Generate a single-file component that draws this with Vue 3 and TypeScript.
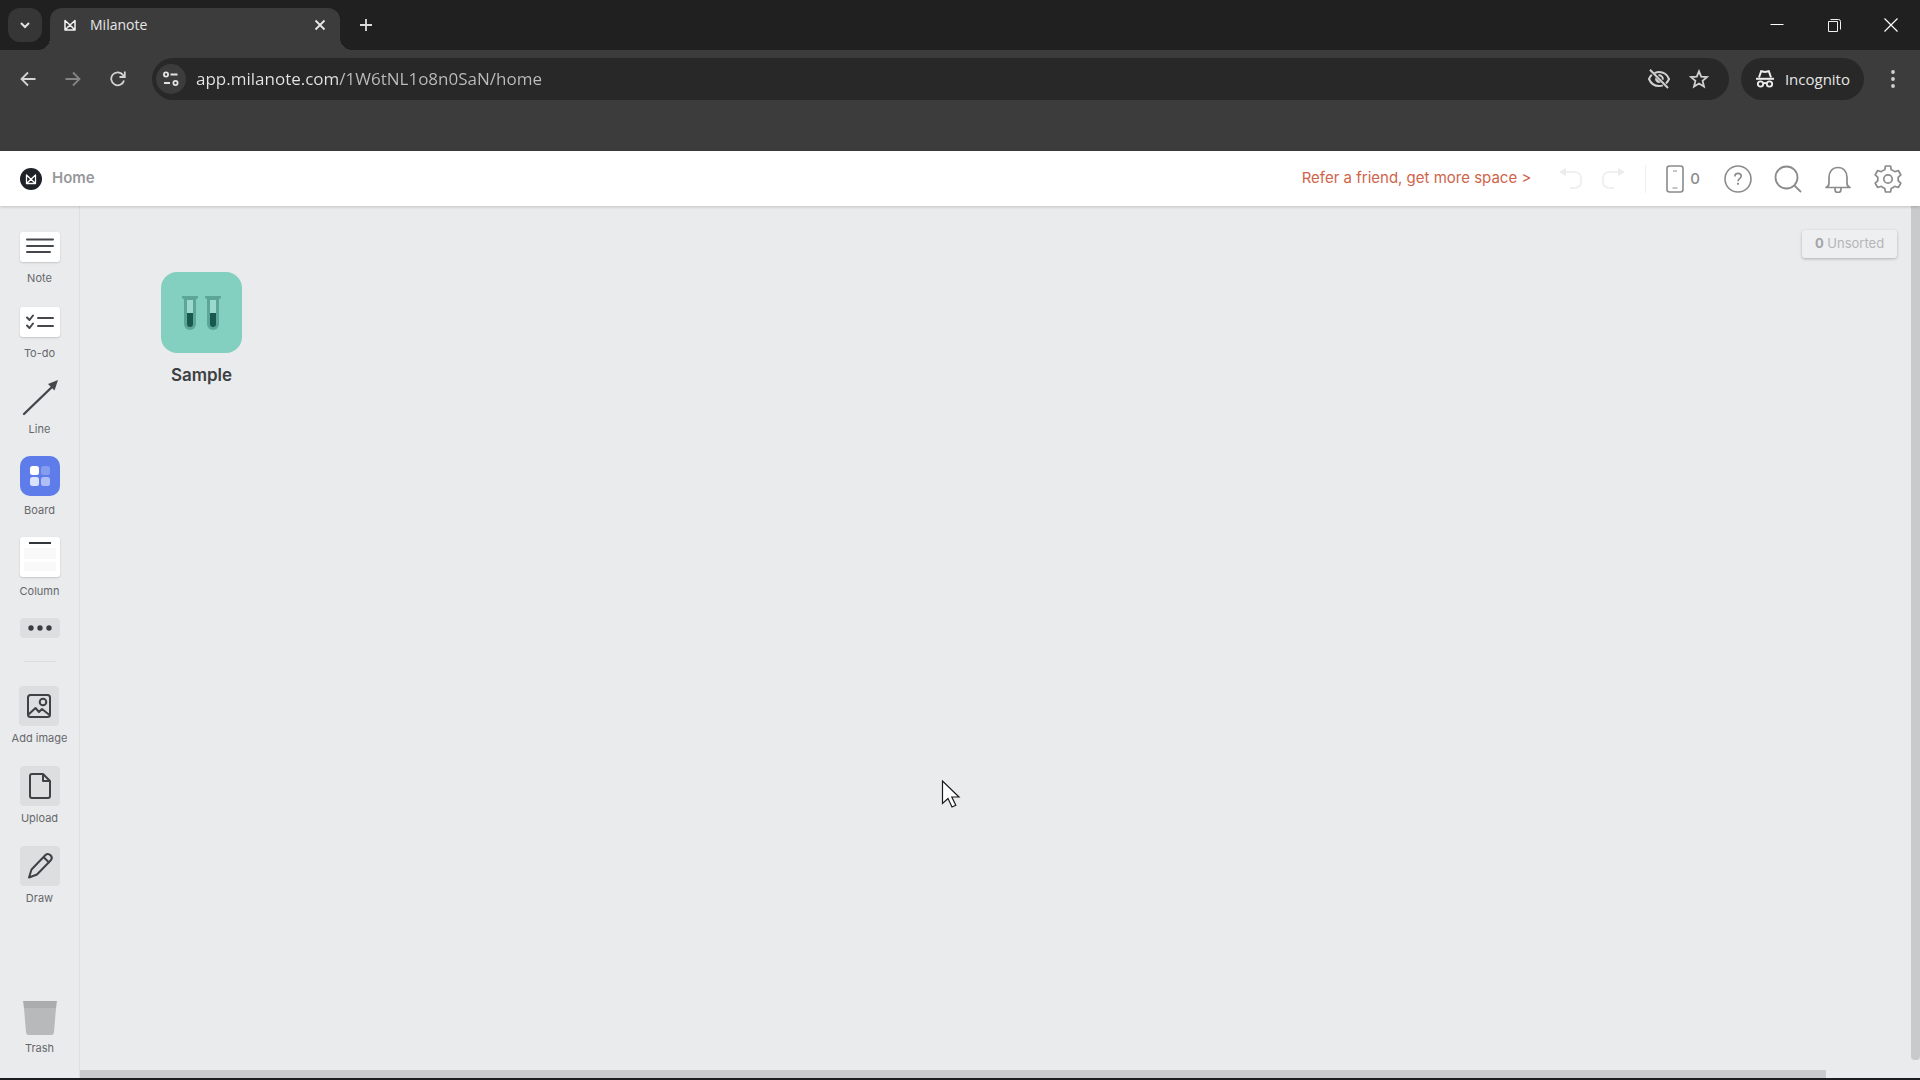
<script setup lang="ts">
import { ref } from 'vue'

interface Tool {
  id: string
  label: string
}

const address = ref('app.milanote.com/1W6tNL1o8n0SaN/home')

const createTools: Tool[] = [
  { id: 'note', label: 'Note' },
  { id: 'todo', label: 'To-do' },
  { id: 'line', label: 'Line' },
  { id: 'board', label: 'Board' },
  { id: 'column', label: 'Column' },
]

const mediaTools: Tool[] = [
  { id: 'image', label: 'Add image' },
  { id: 'upload', label: 'Upload' },
  { id: 'draw', label: 'Draw' },
]
</script>

<template>
  <div class="window">
    <header class="chrome">
      <div class="tabstrip">
        <button class="tab-search" aria-label="Search tabs">
          <svg width="12" height="12" viewBox="0 0 12 12"><path d="M2 4l4 4 4-4" fill="none" stroke="#e3e3e3" stroke-width="2" /></svg>
        </button>
        <div class="tab">
          <svg class="favicon" width="12" height="12" viewBox="0 0 12 12"><path d="M1 11V1.500L6 6l5-4.500V11zM1 11l5-5 5 5" fill="none" stroke="#f2f2f2" stroke-width="1.500" stroke-linejoin="round" /></svg>
          <span class="tab-title">Milanote</span>
          <button class="plain" aria-label="Close tab">
            <svg width="12" height="12" viewBox="0 0 12 12"><path d="M1.500 1.500l9 9M10.500 1.500l-9 9" stroke="#e8e8e8" stroke-width="1.800" /></svg>
          </button>
        </div>
        <button class="plain new-tab" aria-label="New tab">
          <svg width="14" height="14" viewBox="0 0 14 14"><path d="M7 1v12M1 7h12" stroke="#dcdcdc" stroke-width="1.800" /></svg>
        </button>
        <div class="window-controls">
          <button class="plain" aria-label="Minimize">
            <svg width="14" height="14" viewBox="0 0 14 14"><path d="M.5 6.500h13" stroke="#fff" /></svg>
          </button>
          <button class="plain" aria-label="Restore">
            <svg width="14" height="14" viewBox="0 0 14 14"><path d="M1.500 3.500h9v10h-9zM3.500 1.500h8a2 2 0 0 1 2 2v8" fill="none" stroke="#f0f0f0" /></svg>
          </button>
          <button class="plain" aria-label="Close">
            <svg width="14" height="14" viewBox="0 0 14 14"><path d="M.5.5l13 13M13.500.5l-13 13" stroke="#fff" stroke-width="1.200" /></svg>
          </button>
        </div>
      </div>

      <div class="toolbar">
        <nav class="history">
          <button class="plain" aria-label="Back">
            <svg width="16" height="16" viewBox="0 0 16 16"><path d="M15.500 8H2M8 1.500L1.500 8 8 14.500" fill="none" stroke="#d4d4d4" stroke-width="1.800" /></svg>
          </button>
          <button class="plain" aria-label="Forward">
            <svg width="16" height="16" viewBox="0 0 16 16"><path d="M.5 8H14M8 1.500L14.500 8 8 14.500" fill="none" stroke="#858585" stroke-width="1.800" /></svg>
          </button>
          <button class="plain" aria-label="Reload">
            <svg width="16" height="16" viewBox="0 0 16 16"><path d="M14 9.500A6.500 6.500 0 1 1 13 4l1.500 2M14.800.5V6H9.500" fill="none" stroke="#d4d4d4" stroke-width="1.800" /></svg>
          </button>
        </nav>
        <div class="omnibox">
          <button class="site-info" aria-label="View site information">
            <svg width="16" height="16" viewBox="0 0 16 16"><g fill="none" stroke="#e3e3e3" stroke-width="1.800"><circle cx="3" cy="3.500" r="2.100" /><path d="M7.500 3.500h7M1 12h6" /><circle cx="12.500" cy="12" r="2.100" /></g></svg>
          </button>
          <input v-model="address" class="address" type="text" aria-label="Address" spellcheck="false" />
          <button class="plain" aria-label="Third-party cookies blocked">
            <svg width="24" height="20" viewBox="0 0 24 20"><g fill="none" stroke="#d0d0d0" stroke-width="2"><path d="M7.500 4.200C9 3.500 10.500 3 12 3c4.500 0 8.300 2.800 10 7-.7 1.700-1.700 3.200-3 4.400M15.800 16.300c-1.200.5-2.500.7-3.800.7-4.500 0-8.300-2.800-10-7 .7-1.700 1.600-3 2.800-4.200" /><path d="M3 .8L21 19" /><path d="M11.500 6.300a3.800 3.800 0 0 1 4.300 4.300" /></g><path d="M8.500 8.300a4 4 0 0 0 5.200 5.300z" fill="#d0d0d0" /></svg>
          </button>
          <button class="plain" aria-label="Bookmark this tab">
            <svg width="20" height="20" viewBox="0 0 20 20"><path d="M10 2.300l2.200 5.400 5.800.4-4.400 3.800 1.400 5.700L10 14.500l-5 3.100 1.400-5.700L2 8.100l5.800-.4z" fill="none" stroke="#d0d0d0" stroke-width="1.800" /></svg>
          </button>
        </div>
        <button class="incognito">
          <svg width="20" height="18" viewBox="0 0 20 18"><path d="M4 7.500L6.200 1.200l3.800.8 3.800-.8L16 7.500" fill="none" stroke="#ededed" stroke-width="2" /><path d="M1 8.800h18" stroke="#ededed" stroke-width="2" /><g fill="none" stroke="#ededed" stroke-width="1.800"><circle cx="5.500" cy="14" r="2.700" /><circle cx="14.500" cy="14" r="2.700" /><path d="M8.200 13.500q1.800-1 3.600 0" /></g></svg>
          <span>Incognito</span>
        </button>
        <button class="plain menu" aria-label="Menu">
          <svg width="4" height="18" viewBox="0 0 4 18"><g fill="#d0d0d0"><circle cx="2" cy="2" r="1.900" /><circle cx="2" cy="9" r="1.900" /><circle cx="2" cy="16" r="1.900" /></g></svg>
        </button>
      </div>
    </header>

    <header class="appbar">
      <a class="home" href="#">
        <svg width="22" height="22" viewBox="0 0 22 22"><circle cx="11" cy="11" r="11" fill="#1f2227" /><path d="M6.500 15.500V7l4.500 4.200L15.500 7v8.500zM6.500 15.500l4.500-4.300 4.500 4.300" fill="none" stroke="#fff" stroke-width="1.300" stroke-linejoin="round" /></svg>
        <span>Home</span>
      </a>
      <a class="refer" href="#">Refer a friend, get more space &gt;</a>
      <div class="undo-redo">
        <button class="plain" aria-label="Undo" disabled>
          <svg width="24" height="24" viewBox="0 0 24 24"><path d="M4 5h12a6 6 0 0 1 6 6v4a6 6 0 0 1-6 6h-5" fill="none" stroke="#f0f0f1" stroke-width="2" /><path d="M0 5l7-4v8z" fill="#ececed" /></svg>
        </button>
        <button class="plain" aria-label="Redo" disabled>
          <svg width="24" height="24" viewBox="0 0 24 24"><path d="M20 5H8a6 6 0 0 0-6 6v4a6 6 0 0 0 6 6h5" fill="none" stroke="#f0f0f1" stroke-width="2" /><path d="M24 5l-7-4v8z" fill="#ececed" /></svg>
        </button>
      </div>
      <div class="actions">
        <button class="plain phone" aria-label="Mobile uploads">
          <svg width="18" height="28" viewBox="0 0 18 28"><rect x="1" y="1" width="16" height="26" rx="2.500" fill="none" stroke="#8a8b8d" stroke-width="1.600" /><path d="M7 6h4M6.500 23h5" stroke="#8a8b8d" stroke-width="1.200" /></svg>
          <span>0</span>
        </button>
        <button class="plain" aria-label="Help">
          <svg width="28" height="28" viewBox="0 0 28 28"><g fill="none" stroke="#8a8b8d" stroke-width="1.600"><circle cx="14" cy="14" r="13" /><path d="M10.800 11.500c0-2 1.300-3.100 3.200-3.100s3.200 1.100 3.200 2.800c0 2.400-3.200 2.500-3.200 5" /></g><circle cx="14" cy="18.800" r="1.100" fill="#8a8b8d" /></svg>
        </button>
        <button class="plain" aria-label="Search">
          <svg width="28" height="28" viewBox="0 0 28 28"><g fill="none" stroke="#8a8b8d" stroke-width="1.800"><circle cx="12.500" cy="12.500" r="11" /><path d="M20.300 20.300L27 27" /></g></svg>
        </button>
        <button class="plain" aria-label="Notifications">
          <svg width="28" height="28" viewBox="0 0 28 28"><path d="M2 22.500h24c-2.300-.7-3-2.300-3-4.500v-5.500c0-6-3.500-10-9-10s-9 4-9 10V18c0 2.200-.7 3.800-3 4.500zM11 23v1.500a3 3 0 0 0 6 0V23" fill="none" stroke="#8a8b8d" stroke-width="1.700" stroke-linejoin="round" /></svg>
        </button>
        <button class="plain" aria-label="Settings">
          <svg width="28" height="28" viewBox="0 0 28 28"><g fill="none" stroke="#8a8b8d" stroke-width="1.700" stroke-linejoin="round"><path d="M11.500 1h5l.8 3.700q2 .7 3.500 2l3.500-1.200 2.500 4.300-2.700 2.500q.4 1.700 0 3.400l2.700 2.500-2.500 4.300-3.500-1.200q-1.500 1.300-3.500 2l-.8 3.700h-5l-.8-3.700q-2-.7-3.500-2l-3.500 1.200L1.200 18.200l2.700-2.500q-.4-1.700 0-3.400L1.200 9.800l2.500-4.300 3.500 1.200q1.500-1.300 3.500-2z" /><circle cx="14" cy="14" r="4.200" /></g></svg>
        </button>
      </div>
    </header>

    <div class="workspace">
      <aside class="sidebar">
        <button v-for="tool in createTools" :key="tool.id" class="tool" :class="tool.id">
          <svg v-if="tool.id === 'note'" class="card" width="40" height="30" viewBox="0 0 40 30"><path d="M7 7.500h26M7 14h26M7 20h23" stroke="#45474a" stroke-width="2" stroke-linecap="round" /></svg>
          <svg v-else-if="tool.id === 'todo'" class="card" width="40" height="30" viewBox="0 0 40 30"><path d="M18 11h15M18 19h15M7 10.500l2.500 2.500L13 8.500M7 18.500L9.500 21l3.500-4.500" fill="none" stroke="#45474a" stroke-width="2" stroke-linecap="round" stroke-linejoin="round" /></svg>
          <svg v-else-if="tool.id === 'line'" width="40" height="36" viewBox="0 0 40 36"><path d="M4 34L33 6" stroke="#45474a" stroke-width="2.400" stroke-linecap="round" /><path d="M38 0l-3.500 10.500L28 4z" fill="#45474a" /></svg>
          <svg v-else-if="tool.id === 'board'" width="40" height="40" viewBox="0 0 40 40"><rect width="40" height="40" rx="10" fill="#5e7cea" /><g fill="#fff"><rect x="10" y="10" width="9" height="9" rx="2.500" /><rect x="21" y="10" width="9" height="9" rx="2.500" opacity=".25" /><rect x="10" y="21" width="9" height="9" rx="2.500" opacity=".78" /><rect x="21" y="21" width="9" height="9" rx="2.500" opacity=".5" /></g></svg>
          <svg v-else class="card" width="40" height="40" viewBox="0 0 40 40"><path d="M9 6h22" stroke="#323539" stroke-width="2" /><path d="M4 11h32v11H4zM4 25h32v9H4z" fill="#f9f9fa" /></svg>
          <span>{{ tool.label }}</span>
        </button>
        <button class="more" aria-label="More tools">
          <svg width="24" height="6" viewBox="0 0 24 6"><g fill="#3b3d40"><circle cx="3" cy="3" r="2.700" /><circle cx="12" cy="3" r="2.700" /><circle cx="21" cy="3" r="2.700" /></g></svg>
        </button>
        <hr />
        <button v-for="tool in mediaTools" :key="tool.id" class="tool media">
          <svg class="tile" width="40" height="40" viewBox="0 0 40 40">
            <g fill="none" stroke="#3f4144" stroke-width="2" stroke-linejoin="round" stroke-linecap="round">
              <template v-if="tool.id === 'image'"><rect x="9" y="9" width="22" height="22" rx="2.500" /><circle cx="24" cy="16" r="3.300" /><path d="M9.500 28.500l7-6.500 3.500 4 3-3 7.500 6" /></template>
              <template v-else-if="tool.id === 'upload'"><path d="M12 8h11l7 7v15a2 2 0 0 1-2 2H12a2 2 0 0 1-2-2V10a2 2 0 0 1 2-2zM23 8v7h7" /></template>
              <path v-else d="M9 31.500l2.500-8L25.500 9q2.500-2.200 5 .3t.3 5L17 28.500zM23.500 11l5.500 5.500" />
            </g>
          </svg>
          <span>{{ tool.label }}</span>
        </button>
        <button class="tool trash">
          <svg width="36" height="36" viewBox="0 0 36 36"><path d="M2 8h32l-2 24a3 3 0 0 1-3 3H7a3 3 0 0 1-3-3z" fill="#b7b9bb" /><path d="M1 1h34l-1 7H2z" fill="#aaacae" /></svg>
          <span>Trash</span>
        </button>
      </aside>

      <main class="canvas">
        <button class="unsorted"><b>0</b> Unsorted</button>
        <a class="board-link" href="#">
          <svg width="81" height="81" viewBox="0 0 81 81">
            <rect width="81" height="81" rx="16" fill="#83d0c0" />
            <g v-for="x in [21, 44]" :key="x" :transform="`translate(${x} 24)`">
              <path d="M2 2h12v26a6 6 0 0 1-12 0z" fill="#5ba698" />
              <path d="M0 0h16v2q-2 .5-2 2H2q0-1.500-2-2z" fill="#5ba698" />
              <path d="M5 4h6v13H5z" fill="#9ad9cc" />
              <path d="M5 17h6v11a3 3 0 0 1-6 0z" fill="#17594f" />
            </g>
          </svg>
          <span>Sample</span>
        </a>
        <svg class="pointer" width="20" height="28" viewBox="0 0 20 28"><path d="M1.500 1v22.500l5.500-5 4 8.500 3.800-1.800-4-8.200h7.200z" fill="#fff" stroke="#1b1b1b" stroke-width="1.200" /></svg>
        <div class="scroll-v"></div>
        <div class="scroll-h"></div>
      </main>
    </div>
  </div>
</template>

<style>
body {
  margin: 0;
  background: #eaebed;
}
</style>

<style scoped>
.window {
  box-sizing: border-box;
  display: flex;
  flex-direction: column;
  min-height: 100vh;
  border-bottom: 2px solid #1c1d20;
  color: #4b4d50;
  font-family: Inter, "Liberation Sans", sans-serif;
}
button {
  margin: 0;
  padding: 0;
  border: 0;
  background: none;
  color: inherit;
  font: inherit;
}
a {
  color: inherit;
  text-decoration: none;
}
svg {
  display: block;
  flex: none;
}
.plain {
  display: flex;
  align-items: center;
  justify-content: center;
}
.chrome {
  color: #e6e6e6;
  background: #3c3c3c;
  font-family: "Open Sans", "Noto Sans", sans-serif;
}
.tabstrip {
  display: flex;
  align-items: flex-end;
  height: 50px;
  padding: 0 1px 0 8px;
  background: #202020;
}
.tab-search {
  display: flex;
  align-items: center;
  justify-content: center;
  width: 34px;
  height: 34px;
  margin: 0 8px 8px 0;
  border-radius: 12px;
  background: #363636;
}
.tab {
  position: relative;
  display: flex;
  align-items: center;
  box-sizing: border-box;
  width: 290px;
  height: 42px;
  padding: 0 14px;
  border-radius: 12px 12px 0 0;
  background: #3c3c3c;
}
.tab::before,
.tab::after {
  content: "";
  position: absolute;
  bottom: 0;
  width: 12px;
  height: 12px;
}
.tab::before {
  right: 100%;
  background: radial-gradient(circle at 0 0, #202020 12px, #3c3c3c 12px);
}
.tab::after {
  left: 100%;
  background: radial-gradient(circle at 100% 0, #202020 12px, #3c3c3c 12px);
}
.tab-title {
  flex: 1;
  margin-left: 14px;
  padding-bottom: 8px;
  font-size: 14px;
  line-height: 24px;
}
.tab > svg,
.tab > .plain {
  margin-bottom: 8px;
}
.new-tab {
  width: 52px;
  height: 50px;
}
.window-controls {
  display: flex;
  align-items: center;
  height: 50px;
  margin-left: auto;
}
.window-controls .plain {
  width: 57px;
  height: 48px;
}
.toolbar {
  display: flex;
  align-items: flex-start;
  box-sizing: border-box;
  height: 101px;
  padding: 8px 15px 0 20px;
}
.history {
  display: flex;
  gap: 29px;
  align-items: center;
  height: 42px;
}
.omnibox {
  display: flex;
  flex: 1;
  gap: 18px;
  align-items: center;
  height: 42px;
  margin-left: 26px;
  padding: 0 20px 0 4px;
  border-radius: 21px;
  background: #282828;
}
.site-info {
  display: flex;
  align-items: center;
  justify-content: center;
  width: 30px;
  height: 30px;
  border-radius: 50%;
  background: #3c3c3c;
}
.address {
  flex: 1;
  min-width: 0;
  margin: 0 0 0 -8px;
  padding: 0;
  border: 0;
  outline: 0;
  color: #dcdcdc;
  background: linear-gradient(90deg, #e6e6e6 143px, #bdbdbd 143px);
  background-clip: text;
  font: inherit;
  font-size: 17px;
  line-height: 28px;
  -webkit-text-fill-color: transparent;
}
.incognito {
  display: flex;
  gap: 10px;
  align-items: center;
  height: 42px;
  margin-left: 12px;
  padding: 0 14px;
  border-radius: 21px;
  background: #282828;
  font-size: 15px;
}
.menu {
  width: 24px;
  height: 42px;
  margin-left: 17px;
}
.appbar {
  position: relative;
  z-index: 1;
  display: flex;
  align-items: center;
  height: 55px;
  padding: 0 18px 0 20px;
  background: #fff;
  box-shadow: 0 1px 3px rgba(0, 0, 0, 0.18);
}
.home {
  display: flex;
  gap: 10px;
  align-items: center;
  color: #97999b;
  font-size: 15px;
  font-weight: 600;
}
.home span,
.refer {
  padding-bottom: 2px;
}
.refer {
  margin-left: auto;
  color: #cf6449;
  font-size: 15px;
}
.undo-redo {
  display: flex;
  gap: 18px;
  align-items: center;
  height: 28px;
  margin-left: 28px;
  padding-right: 20px;
  border-right: 1px solid #efefef;
}
.actions {
  display: flex;
  gap: 22px;
  align-items: center;
  margin-left: 20px;
}
.phone {
  gap: 6px;
  margin-right: 2px;
  color: #8a8b8d;
  font-size: 15px;
  font-weight: 500;
}
.workspace {
  display: flex;
  flex: 1;
}
.sidebar {
  display: flex;
  flex-direction: column;
  align-items: center;
  box-sizing: border-box;
  width: 80px;
  padding-top: 26px;
  border-right: 1px solid #dedfe1;
}
.tool {
  display: flex;
  flex-direction: column;
  gap: 8px;
  align-items: center;
  color: #66686b;
  font-size: 11px;
  line-height: 16px;
  white-space: nowrap;
}
.note {
  margin-bottom: 21px;
}
.todo,
.line,
.board,
.column {
  margin-bottom: 19px;
}
.line {
  gap: 5px;
}
.board,
.column {
  gap: 6px;
}
.card {
  border-radius: 3px;
  background: #fff;
  box-shadow: 0 1px 2px rgba(0, 0, 0, 0.16);
}
.more {
  display: flex;
  align-items: center;
  justify-content: center;
  width: 40px;
  height: 20px;
  border-radius: 4px;
  background: #dddee0;
}
hr {
  width: 32px;
  height: 1px;
  margin: 23px 0 24px;
  border: 0;
  background: #dbdcde;
}
.media {
  gap: 4px;
  margin-bottom: 20px;
}
.tile {
  border-radius: 4px;
  background: #dddee0;
}
.trash {
  gap: 4px;
  margin-top: auto;
  margin-bottom: 22px;
}
.canvas {
  position: relative;
  flex: 1;
  background: #eaebed;
}
.unsorted {
  position: absolute;
  top: 24px;
  right: 23px;
  width: 95px;
  height: 28px;
  padding-bottom: 2px;
  border-radius: 3px;
  color: #b4b6b8;
  background: #eeeff0;
  box-shadow: 0 1px 3px rgba(0, 0, 0, 0.25);
  font-size: 13px;
}
.unsorted b {
  font-weight: 700;
  color: #a3a5a7;
}
.board-link {
  position: absolute;
  top: 66px;
  left: 81px;
  display: flex;
  flex-direction: column;
  gap: 10px;
  align-items: center;
  color: #3d3f42;
  font-size: 17px;
  font-weight: 600;
  line-height: 24px;
}
.pointer {
  position: absolute;
  top: 574px;
  left: 861px;
}
.scroll-v {
  position: absolute;
  top: 0;
  right: 0;
  bottom: 18px;
  width: 9px;
  border-radius: 0 0 4px 4px;
  background: #c8cacc;
}
.scroll-h {
  position: absolute;
  right: 94px;
  bottom: 0;
  left: 0;
  height: 8px;
  background: #c8cacc;
}
</style>
